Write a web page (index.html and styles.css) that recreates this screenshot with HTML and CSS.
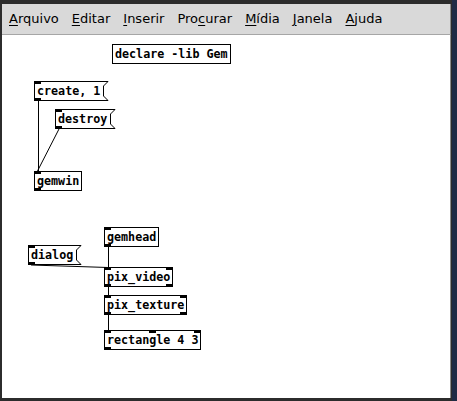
FILE: index.html
```html
<!DOCTYPE html>
<html lang="pt">
<head>
<meta charset="utf-8">
<title>Pd patch</title>
<link rel="stylesheet" href="styles.css">
</head>
<body>
<div class="window">
  <div class="menubar">
    <span class="menu"><u>A</u>rquivo</span>
    <span class="menu"><u>E</u>ditar</span>
    <span class="menu"><u>I</u>nserir</span>
    <span class="menu">Pro<u>c</u>urar</span>
    <span class="menu"><u>M</u>ídia</span>
    <span class="menu"><u>J</u>anela</span>
    <span class="menu"><u>A</u>juda</span>
  </div>
  <div class="canvas">
    <svg class="wires" width="448" height="362" viewBox="0 0 448 362">
      <line x1="36.5" y1="66" x2="36.5" y2="137"/>
      <line x1="57" y1="95" x2="35.5" y2="137"/>
      <line x1="106.5" y1="213" x2="106.5" y2="233"/>
      <line x1="29" y1="231" x2="106" y2="233.5"/>
      <line x1="106.5" y1="253" x2="106.5" y2="261"/>
      <line x1="106.5" y1="281" x2="106.5" y2="296"/>
    </svg>

    <div class="obj declare">declare -lib Gem</div>

    <div class="msg create">create, 1<span class="in l"></span><span class="out l"></span><svg class="flag" width="7" height="20"><polyline points="0,0.5 6,0.5 1.5,5 1.5,15 6,19.5 0,19.5"/></svg></div>
    <div class="msg destroy">destroy<span class="in l"></span><span class="out l"></span><svg class="flag" width="7" height="20"><polyline points="0,0.5 6,0.5 1.5,5 1.5,15 6,19.5 0,19.5"/></svg></div>
    <div class="obj gemwin">gemwin<span class="in l"></span><span class="out l"></span></div>

    <div class="obj gemhead">gemhead<span class="in l"></span><span class="out l"></span></div>
    <div class="msg dialog">dialog<span class="in l"></span><span class="out l"></span><svg class="flag" width="7" height="20"><polyline points="0,0.5 6,0.5 1.5,5 1.5,15 6,19.5 0,19.5"/></svg></div>
    <div class="obj pixvideo">pix_video<span class="in l"></span><span class="in r"></span><span class="out l"></span><span class="out r"></span></div>
    <div class="obj pixtexture">pix_texture<span class="in l"></span><span class="in r"></span><span class="out l"></span><span class="out r"></span></div>
    <div class="obj rect">rectangle 4 3<span class="in l"></span><span class="in m"></span><span class="in r"></span><span class="out l"></span></div>
  </div>
</div>
</body>
</html>
```
FILE: styles.css
```css
html, body {
  margin: 0;
  padding: 0;
}
body {
  width: 457px;
  height: 401px;
  background: #1f2b45;
  overflow: hidden;
}
.window {
  width: 452px;
  height: 401px;
  box-sizing: border-box;
  background: #2c2c2c;
  padding: 4px 1px 3px 2px;
  display: flex;
  flex-direction: column;
}
.menubar {
  height: 31px;
  box-sizing: border-box;
  background: #d9d9d9;
  border-bottom: 1px solid #a6a6a6;
  border-right: 1px solid #8a8a8a;
  display: flex;
  align-items: flex-start;
  gap: 13px;
  padding: 7px 0 0 7px;
  font-family: "DejaVu Sans", sans-serif;
  font-size: 13px;
  color: #000;
}
.menu u {
  text-decoration: underline;
  text-underline-offset: 2px;
}
.canvas {
  flex: 1;
  position: relative;
  background: #fff;
  border-right: 1px solid #8a8a8a;
  font-family: "DejaVu Sans Mono", monospace;
  font-weight: bold;
  font-size: 11.7px;
  color: #000;
}
.wires {
  position: absolute;
  left: 0;
  top: -1px;
}
.wires line {
  stroke: #000;
  stroke-width: 1;
}
.obj, .msg {
  position: absolute;
  height: 20px;
  box-sizing: border-box;
  line-height: 18px;
  padding: 0 2px;
  white-space: nowrap;
  background: #fff;
  border: 1px solid #000;
}
.msg {
  border-right: none;
  padding-right: 3px;
}
.flag {
  position: absolute;
  top: -1px;
  right: -6px;
}
.flag polyline {
  fill: none;
  stroke: #000;
  stroke-width: 1;
}
.in, .out {
  position: absolute;
  width: 7px;
  height: 3px;
  background: #000;
}
.in { top: -1px; }
.out { bottom: -1px; }
.l { left: -1px; }
.r { right: -1px; }
.m { left: calc(50% - 4px); }

.declare { left: 110px; top: 9px; }
.create { left: 32px; top: 46px; }
.destroy { left: 53px; top: 74px; }
.gemwin { left: 32px; top: 136px; }
.gemhead { left: 102px; top: 192px; }
.dialog { left: 26px; top: 210px; }
.pixvideo { left: 102px; top: 232px; }
.pixtexture { left: 102px; top: 260px; }
.rect { left: 102px; top: 295px; }
```
